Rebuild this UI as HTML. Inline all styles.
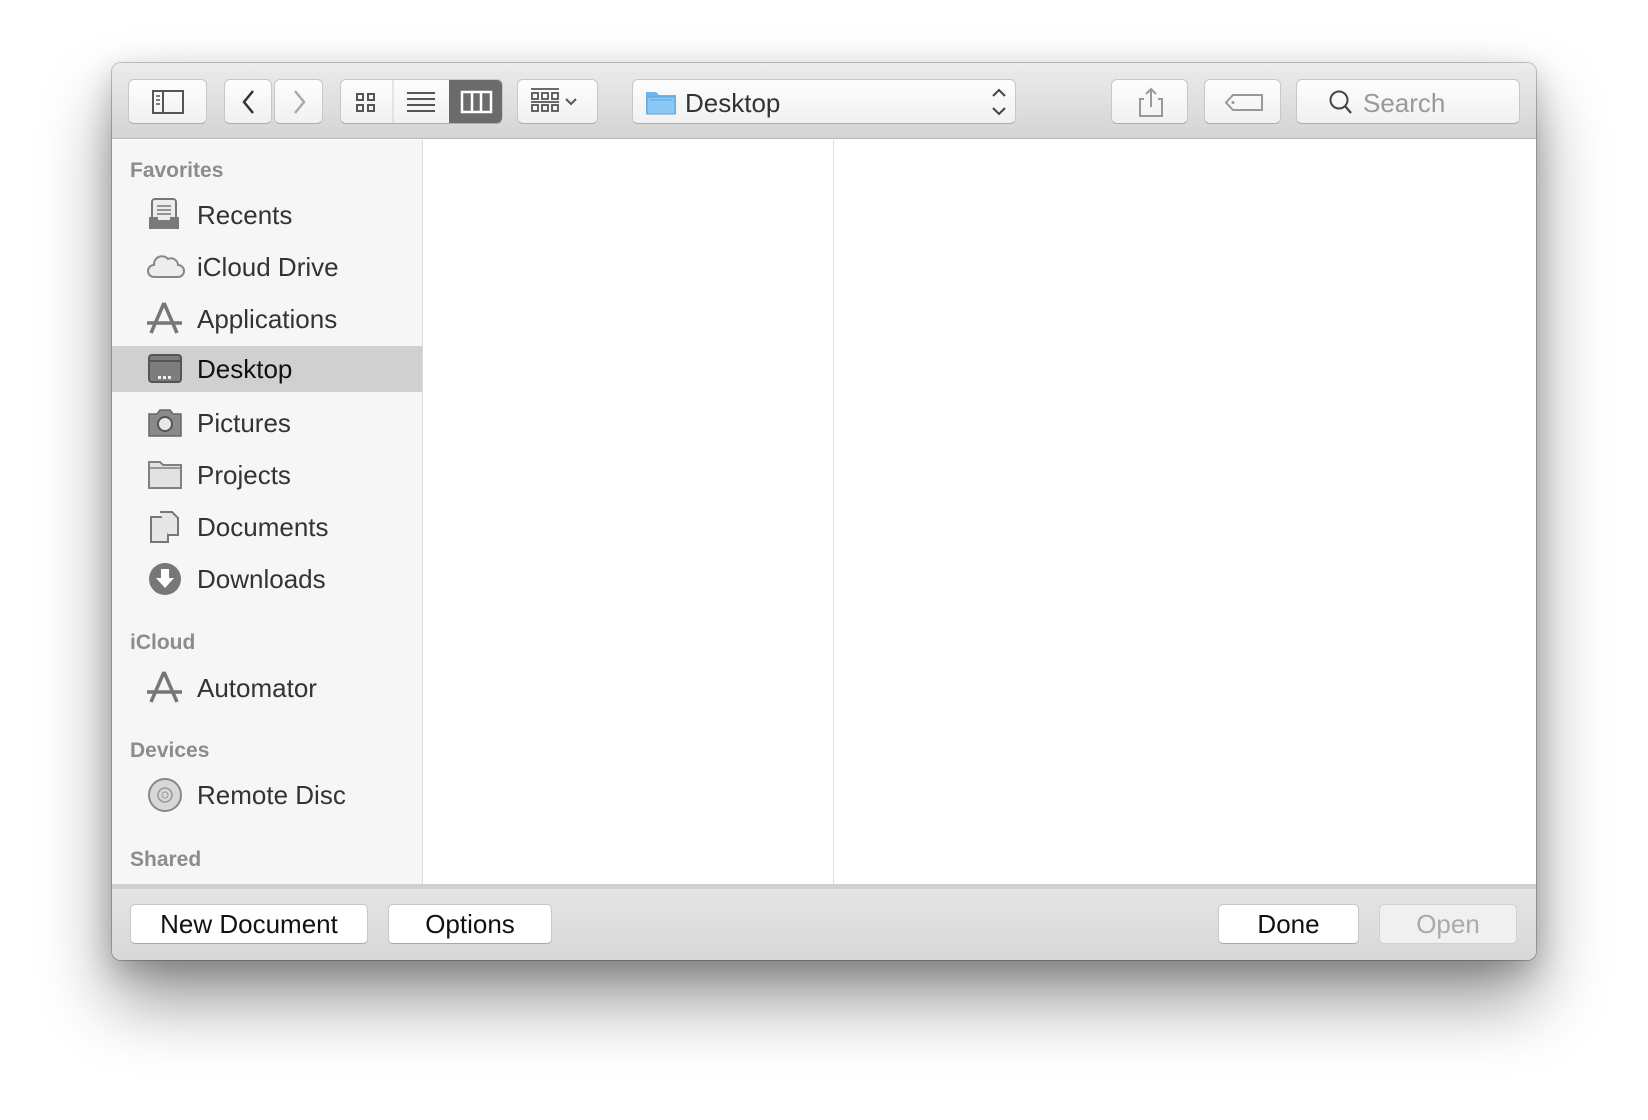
<!DOCTYPE html>
<html><head><meta charset="utf-8"><style>
*{box-sizing:border-box;margin:0;padding:0}
body{width:1648px;height:1120px;background:#fff;font-family:"Liberation Sans",sans-serif;position:relative;overflow:hidden}
.win{position:absolute;left:112px;top:63px;width:1424px;height:897px;border-radius:9px;overflow:hidden;background:#fff;box-shadow:0 0 0 1px rgba(0,0,0,.22),0 40px 70px rgba(0,0,0,.42),0 10px 30px rgba(0,0,0,.2)}
.tb{position:absolute;left:0;top:0;width:100%;height:76px;background:linear-gradient(#ececec,#d4d4d4);border-bottom:1px solid #b8b8b8}
.btn{position:absolute;top:16px;height:45px;background:linear-gradient(#fdfdfd,#f1f1f1);border:1px solid #c8c8c8;border-bottom-color:#aeaeae;border-radius:6px}
.btn svg{position:absolute;left:0;top:0}
.side{position:absolute;left:0;top:77px;width:311px;height:744px;background:#f6f6f6;border-right:1px solid #dcdcdc}
.h{position:absolute;left:18px;font-size:21px;font-weight:bold;color:#8c8c8c}
.it{position:absolute;left:0;width:310px;height:46px;font-size:26px;color:#333;line-height:46px;padding-left:85px}
.it svg{position:absolute;left:34px;top:5px}
.sel{background:#d0d0d0;color:#111}
.col{position:absolute;left:721px;top:77px;width:1px;height:744px;background:#dedede}
.ft{position:absolute;left:0;top:821px;width:100%;height:76px;background:linear-gradient(#e4e4e4,#d8d8d8);border-top:5px solid #d0d0d0}
.fb{position:absolute;top:15px;height:40px;background:#fff;border:1px solid #c6c6c6;border-bottom-color:#a8a8a8;border-radius:5px;font-size:26px;line-height:38px;text-align:center;color:#111}
</style></head><body>
<div class="win">
 <div class="tb">
  <div class="btn" style="left:16px;width:79px"><svg width="79" height="45"><rect x="24" y="11" width="30" height="22" fill="none" stroke="#555" stroke-width="2"/><line x1="34" y1="11" x2="34" y2="33" stroke="#555" stroke-width="2"/><line x1="27" y1="16" x2="31" y2="16" stroke="#555" stroke-width="1.5"/><line x1="27" y1="20" x2="31" y2="20" stroke="#555" stroke-width="1.5"/><line x1="27" y1="24" x2="31" y2="24" stroke="#555" stroke-width="1.5"/></svg></div>
  <div class="btn" style="left:112px;width:48px"><svg width="48" height="45"><path d="M28 11 L19 22 L28 33" fill="none" stroke="#333" stroke-width="2.5"/></svg></div>
  <div class="btn" style="left:162px;width:49px"><svg width="49" height="45"><path d="M20 11 L29 22 L20 33" fill="none" stroke="#aaa" stroke-width="2.5"/></svg></div>
  <div class="btn" style="left:228px;width:163px;overflow:hidden"><svg width="163" height="45"><g fill="none" stroke="#555" stroke-width="2"><rect x="16" y="14" width="6" height="6"/><rect x="27" y="14" width="6" height="6"/><rect x="16" y="25" width="6" height="6"/><rect x="27" y="25" width="6" height="6"/></g><line x1="52" y1="0" x2="52" y2="45" stroke="#d0d0d0"/><g stroke="#555" stroke-width="2"><line x1="66" y1="13" x2="94" y2="13"/><line x1="66" y1="19" x2="94" y2="19"/><line x1="66" y1="25" x2="94" y2="25"/><line x1="66" y1="31" x2="94" y2="31"/></g><rect x="108" y="-1" width="56" height="47" fill="#6b6b6b"/><g fill="none" stroke="#fff" stroke-width="2.5"><rect x="121" y="12" width="29" height="20"/><line x1="131" y1="12" x2="131" y2="32"/><line x1="140" y1="12" x2="140" y2="32"/></g></svg></div>
  <div class="btn" style="left:405px;width:81px"><svg width="81" height="45"><g fill="none" stroke="#555" stroke-width="1.8"><line x1="13" y1="9" x2="41" y2="9"/><rect x="14" y="13" width="6" height="6"/><rect x="24" y="13" width="6" height="6"/><rect x="34" y="13" width="6" height="6"/><rect x="14" y="25" width="6" height="6"/><rect x="24" y="25" width="6" height="6"/><rect x="34" y="25" width="6" height="6"/><line x1="13" y1="22" x2="41" y2="22"/><path d="M48 19 L53 24 L58 19" stroke-width="2"/></g></svg></div>
  <div class="btn" style="left:520px;width:384px"><svg width="384" height="45"><path d="M13 12 h10 l3 3 h17 v19 h-30z" fill="#6fb4ec"/><rect x="14" y="17" width="28" height="17" fill="#8cc8f5" stroke="#5ea3dd"/><line x1="17" y1="20" x2="39" y2="20" stroke="#5ea3dd"/><path d="M360 16 L366 10 L372 16 M360 28 L366 34 L372 28" fill="none" stroke="#444" stroke-width="2"/></svg><span style="position:absolute;left:52px;top:8px;font-size:26px;color:#333">Desktop</span></div>
  <div class="btn" style="left:999px;width:77px"><svg width="77" height="45"><path d="M32 19 h-4 v17 h22 v-17 h-4" fill="none" stroke="#999" stroke-width="2"/><path d="M39 27 V9 M34 14 L39 9 L44 14" fill="none" stroke="#999" stroke-width="2"/></svg></div>
  <div class="btn" style="left:1092px;width:77px"><svg width="77" height="45"><path d="M28 15 H57 V30 H28 L21 22.5 Z" fill="none" stroke="#999" stroke-width="2"/><circle cx="28" cy="22.5" r="1.5" fill="#999"/></svg></div>
  <div class="btn" style="left:1184px;width:224px"><svg width="60" height="45"><circle cx="42" cy="20" r="8.5" fill="none" stroke="#444" stroke-width="2"/><line x1="48" y1="26" x2="54" y2="33" stroke="#444" stroke-width="2.2"/></svg><span style="position:absolute;left:66px;top:8px;font-size:26px;color:#999">Search</span></div>
 </div>
 <div class="side">
  <div class="h" style="top:19px">Favorites</div>
  <div class="it" style="top:52px"><svg width="40" height="36"><rect x="6" y="2" width="24" height="24" rx="3" fill="#ececec" stroke="#777" stroke-width="2"/><g stroke="#777" stroke-width="1.5"><line x1="11" y1="9" x2="25" y2="9"/><line x1="11" y1="13" x2="25" y2="13"/><line x1="11" y1="17" x2="25" y2="17"/></g><path d="M3 20 h9 v3 h12 v-3 h9 v12 h-30z" fill="#7a7a7a"/></svg>Recents</div>
  <div class="it" style="top:104px"><svg width="40" height="36"><path d="M8 28 a6 6 0 0 1 0-12 a8 8 0 0 1 14-6 a7 7 0 0 1 10 6 a6 6 0 0 1 0 12z" fill="#ededed" stroke="#888" stroke-width="2"/></svg>iCloud Drive</div>
  <div class="it" style="top:156px"><svg width="40" height="36"><g stroke="#777" stroke-width="3.5" fill="none"><path d="M18 2 L5 32"/><path d="M18 2 L31 32"/><path d="M1 22 H36"/></g></svg>Applications</div>
  <div class="it sel" style="top:206px"><svg width="40" height="36"><rect x="3" y="4" width="32" height="27" rx="3" fill="#7d7d7d" stroke="#555" stroke-width="2"/><line x1="3" y1="10" x2="35" y2="10" stroke="#555" stroke-width="2"/><g fill="#eee"><rect x="12" y="25" width="3" height="3"/><rect x="17" y="25" width="3" height="3"/><rect x="22" y="25" width="3" height="3"/></g></svg>Desktop</div>
  <div class="it" style="top:260px"><svg width="40" height="36"><path d="M3 9 h8 l3-4 h10 l3 4 h8 v22 h-32z" fill="#8a8a8a" stroke="#666" stroke-width="1.5"/><circle cx="19" cy="19" r="7" fill="#e8e8e8" stroke="#555" stroke-width="2"/></svg>Pictures</div>
  <div class="it" style="top:312px"><svg width="40" height="36"><path d="M3 5 h11 l3 3 h18 v23 h-32z" fill="#e2e2e2" stroke="#808080" stroke-width="2"/><line x1="3" y1="11" x2="35" y2="11" stroke="#808080" stroke-width="1.5"/></svg>Projects</div>
  <div class="it" style="top:364px"><svg width="40" height="36"><path d="M5 8 h12 l5 5 v20 h-17z" fill="#e6e6e6" stroke="#777" stroke-width="2"/><path d="M14 3 h12 l6 6 v17 h-10" fill="#e6e6e6" stroke="#777" stroke-width="2"/></svg>Documents</div>
  <div class="it" style="top:416px"><svg width="40" height="36"><circle cx="19" cy="18" r="16" fill="#777"/><path d="M15 8 h8 v9 h5 l-9 10 l-9-10 h5z" fill="#fff"/></svg>Downloads</div>
  <div class="h" style="top:491px">iCloud</div>
  <div class="it" style="top:525px"><svg width="40" height="36"><g stroke="#777" stroke-width="3.5" fill="none"><path d="M18 2 L5 32"/><path d="M18 2 L31 32"/><path d="M1 22 H36"/></g></svg>Automator</div>
  <div class="h" style="top:599px">Devices</div>
  <div class="it" style="top:632px"><svg width="40" height="36"><circle cx="19" cy="18" r="16" fill="#d8d8d8" stroke="#888" stroke-width="2"/><circle cx="19" cy="18" r="7" fill="none" stroke="#999" stroke-width="1.5"/><circle cx="19" cy="18" r="3" fill="none" stroke="#999"/></svg>Remote Disc</div>
  <div class="h" style="top:708px">Shared</div>
 </div>
 <div class="col"></div>
 <div class="ft">
  <div class="fb" style="left:18px;width:238px">New Document</div>
  <div class="fb" style="left:276px;width:164px">Options</div>
  <div class="fb" style="left:1106px;width:141px">Done</div>
  <div class="fb" style="left:1267px;width:138px;color:#aaa;background:#f0f0f0;border-color:#d0d0d0">Open</div>
 </div>
</div>
</body></html>
